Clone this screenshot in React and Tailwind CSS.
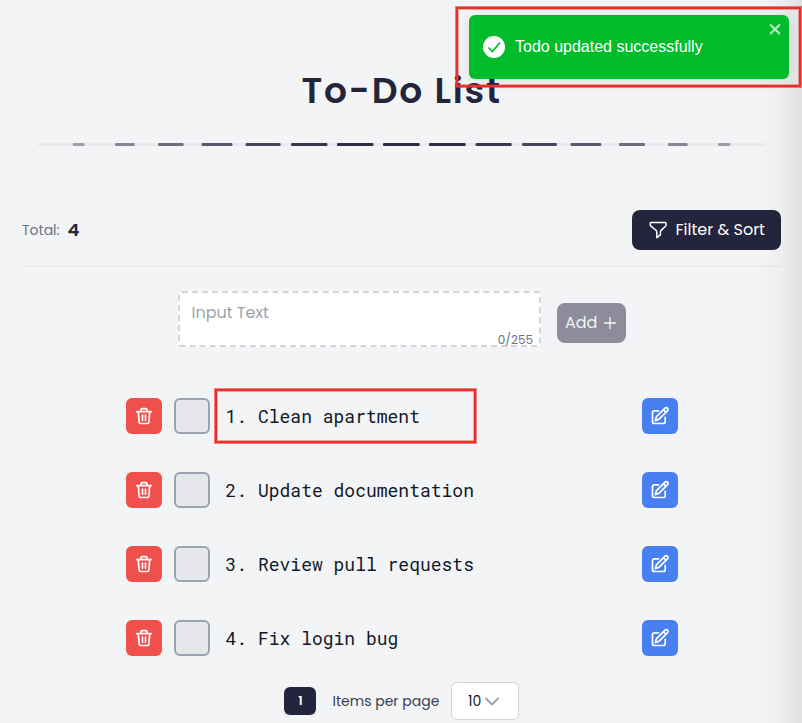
import React from "react";

const todos = ["Clean apartment", "Update documentation", "Review pull requests", "Fix login bug"];

// [start, end, opacity] of each dash in the divider
const dashes = [
  [72.7, 84.7, 0.38], [115, 134.7, 0.5], [158, 183.7, 0.62], [201.5, 232.5, 0.72],
  [245.5, 280.7, 0.82], [291, 327.5, 0.9], [337, 373.5, 0.95], [383, 419.7, 0.95],
  [429, 465.7, 0.95], [475.5, 511.7, 0.9], [522, 557, 0.82], [570.5, 601.3, 0.72],
  [619, 645, 0.62], [668, 687.7, 0.5], [718, 730.3, 0.38],
];

function TrashIcon() {
  return (
    <svg width="18" height="20" viewBox="0 0 18 20" fill="none" stroke="white" strokeWidth="1.700" strokeLinecap="round" strokeLinejoin="round">
      <path d="M1.700 5.600H16.300M6 5V3.700c0-.7.4-1.100 1.100-1.100h3.800c.7 0 1.100.4 1.100 1.100V5M3.300 5.800l.8 10.200c.1 1 .6 1.500 1.500 1.500h6.800c.9 0 1.400-.5 1.500-1.500l.8-10.200M7.500 9v5.200M10.500 9v5.200" />
    </svg>
  );
}

function EditIcon() {
  return (
    <svg width="20" height="20" viewBox="0 0 20 20" fill="none" stroke="white" strokeWidth="1.700" strokeLinecap="round" strokeLinejoin="round">
      <path d="M8.500 4.800H4.500C3.200 4.800 2.500 5.500 2.500 6.800v8.700c0 1.300.7 2 2 2h8.700c1.300 0 2-.7 2-2v-4.200" />
      <path d="M5.400 14.600l1.100-4 8.300-8.300c.8-.8 2-.8 2.700-.1s.7 1.900-.1 2.700l-8.300 8.300-3.700 1.400zM13.500 3.700l2.600 2.600" />
    </svg>
  );
}

function TodoRow({ index, text }) {
  return (
    <li className="flex h-[74px] items-center">
      <button className="flex size-9 items-center justify-center rounded-md bg-[#ef504b]"><TrashIcon /></button>
      <span className="ml-3 size-9 rounded-md border-2 border-[#9ca3af] bg-[#e5e7eb]" />
      <span className="ml-[15.5px] flex-1 whitespace-pre font-['Roboto_Mono','DejaVu_Sans_Mono',monospace] text-[18px] leading-7 text-[#111827]">{index}. {text}</span>
      <button className="flex size-9 items-center justify-center rounded-md bg-[#4880f2]"><EditIcon /></button>
    </li>
  );
}

function Toast() {
  return (
    <div className="absolute left-[469px] top-[15px] flex h-16 w-80 items-center rounded-md bg-[#00bc2b] pl-[14px] font-['Liberation_Sans',sans-serif] text-base text-white shadow-[0_2px_14px_rgba(0,0,0,0.1)]">
      <svg width="22" height="22" viewBox="0 0 22 22">
        <circle cx="11" cy="11" r="11" fill="white" />
        <path d="M5.500 11.500l4 4L17 6.500" fill="none" stroke="#00bc2b" strokeWidth="1.700" />
      </svg>
      <span className="ml-[10px]">Todo updated successfully</span>
      <svg className="absolute right-2 top-2" width="12" height="12" viewBox="0 0 12 12" stroke="white" strokeWidth="2.200" opacity=".7">
        <path d="M1.200 1.500l9.600 9.500M10.800 1.500l-9.600 9.500" />
      </svg>
    </div>
  );
}

export default function App() {
  return (
    <div className="relative h-[723px] w-[802px] overflow-hidden bg-[#f3f4f6] font-['Poppins','Inter',sans-serif] text-[#24243c]">
      <div className="absolute inset-y-0 right-0 w-11 bg-linear-to-r from-transparent via-black/2 to-black/8" />
      <main className="flex flex-col px-[22px] pt-[66px]">
        <h1 className="ml-[279.5px] h-[50px] whitespace-nowrap text-[36px] font-semibold leading-[50px] tracking-[1.8px]">To-Do List</h1>
        <svg className="mt-[26px] ml-4" width="728" height="5" viewBox="38 142 728 5">
          <rect x="38" y="143" width="727" height="3" rx="1.5" fill="#e9eaec" />
          {dashes.map(([a, b, o]) => (
            <rect key={a} x={a} y="143" width={b - a} height="3" rx="1.3" fill="#24203b" opacity={o} />
          ))}
        </svg>
        <section className="mt-[63px] flex h-[57px] w-[759px] items-start justify-between border-b border-[#e2e4e9]">
          <div className="flex h-10 items-center">
            <span className="text-[14px] text-[#6b7280]">Total:</span>
            <span className="-mt-[2px] ml-2 text-[18px] font-semibold">4</span>
          </div>
          <button className="flex h-10 w-[149px] items-center rounded-lg bg-[#24243c] pl-4 text-base text-white">
            <svg width="20" height="20" viewBox="0 0 20 20" fill="none" stroke="white" strokeWidth="1.500" strokeLinejoin="round">
              <path d="M2.800 2.500h14.300c.7 0 1 .5 1 1.200v1.200c0 .6-.3 1.100-.8 1.600l-3.700 3.400c-.9.8-1.200 1.400-1.200 2.300v2.700L8.800 17.700v-5.500c0-.9-.4-1.500-1.100-2.200L3.100 6.300c-.6-.5-.9-1-.9-1.700v-1.200c0-.6.2-.9.6-.9z" />
            </svg>
            <span className="ml-[7.5px] whitespace-nowrap">Filter &amp; Sort</span>
          </button>
        </section>
        <section className="ml-[156px] mt-6 flex items-start">
          <div className="flex h-14 w-[363px] flex-col rounded border-2 border-dashed border-[#d1d5db] bg-white">
            <span className="ml-[11.5px] mt-2 text-base leading-6 text-[#9ca3af]">Input Text</span>
            <span className="mr-[6px] mt-[7px] self-end text-[12px] leading-[15px] text-[#6b7280]">0/255</span>
          </div>
          <button className="ml-4 mt-3 flex h-10 w-[69px] items-center rounded-lg bg-[#8c8c9b] pl-2 text-base text-[#f3f4f6]">
            <span>Add</span>
            <svg className="ml-[6px]" width="14" height="14" viewBox="0 0 14 14" stroke="currentColor" strokeWidth="1.300"><path d="M7 1v12M1 7h12" /></svg>
          </button>
        </section>
        <ul className="ml-[104px] mt-8 w-[552px]">
          {todos.map((t, i) => <TodoRow key={t} index={i + 1} text={t} />)}
        </ul>
        <footer className="ml-[262px] mt-[7px] flex h-[38px] items-center">
          <span className="flex h-7 w-8 items-center justify-center rounded-md bg-[#24243c] pl-px text-[12px] font-semibold text-white">1</span>
          <span className="ml-[16.5px] w-[118.5px] whitespace-nowrap text-[14px] text-[#374151]">Items per page</span>
          <div className="flex h-[38px] w-[68px] items-center rounded-md border border-[#d1d5db] bg-white pl-4 text-[14px] text-[#111827]">
            <span>10</span>
            <svg className="ml-1" width="14" height="9" viewBox="0 0 14 9" fill="none" stroke="#9ca3af" strokeWidth="1.900" strokeLinecap="round" strokeLinejoin="round"><path d="M1 1.500l6 6 6-6" /></svg>
          </div>
        </footer>
      </main>
      <Toast />
      <div className="absolute left-[456px] top-[7px] h-[80px] w-[345px] border-2 border-[#e8302b] shadow-[0_0_0_1px_rgba(232,48,43,0.6),inset_0_0_0_1px_rgba(232,48,43,0.4)]" />
      <div className="absolute left-[215px] top-[389px] h-[54px] w-[261px] border-2 border-[#e8302b] shadow-[0_0_0_1px_rgba(232,48,43,0.6),inset_0_0_0_1px_rgba(232,48,43,0.4)]" />
    </div>
  );
}
